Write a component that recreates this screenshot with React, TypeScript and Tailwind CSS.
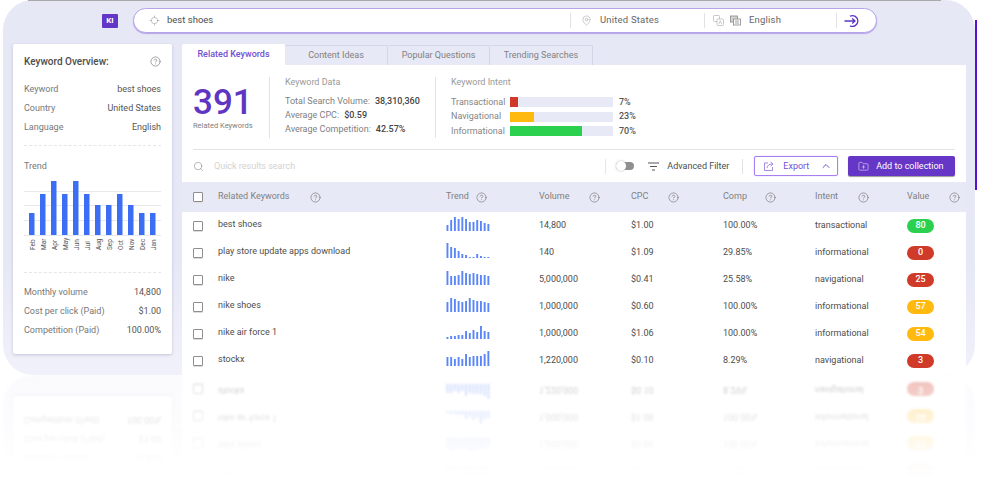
import React from "react";
import { CircleHelp, Search, ChevronUp, FolderPlus, MapPin, Locate } from "lucide-react";

const Help = ({ className = "" }: { className?: string }) => (
  <CircleHelp size={11} strokeWidth={1.3} className={"shrink-0 text-[#6b6b6b] " + className} />
);

const months = ["Feb", "Mar", "Apr", "May", "Jun", "Jul", "Aug", "Sep", "Oct", "Nov", "Dec", "Jan"];
const big = [22, 41, 54, 41, 54, 41, 30, 30, 41, 30, 22, 22];

const TrendChart = () => (
  <svg width="138" height="72" viewBox="0 0 138 72" className="mt-[7px] block">
    {[10, 24, 39, 54].map((y) => (
      <line key={y} x1="0" x2="137" y1={y + 0.5} y2={y + 0.5} stroke="#e8e8e8" strokeWidth="1" />
    ))}
    {big.map((h, i) => (
      <rect key={i} x={5 + i * 11} y={54 - h} width="5.5" height={h} fill="#3b6ef5" />
    ))}
    {months.map((m, i) => (
      <text
        key={m}
        transform={`translate(${10.5 + i * 11},69) rotate(-90)`}
        fontSize="6.5"
        fill="#555"
        fontFamily="Roboto, sans-serif"
      >
        {m}
      </text>
    ))}
  </svg>
);

const Spark = ({ v }: { v: number[] }) => (
  <svg width="46" height="16" viewBox="0 0 46 16" className="block">
    {v.map((h, i) => (
      <rect key={i} x={0.5 + i * 3.72} y={16 - h} width="1.9" height={h} fill="#5a86f7" />
    ))}
  </svg>
);

const TranslateIcon = ({ color, back }: { color: string; back: boolean }) => (
  <svg width="11" height="11" viewBox="0 0 11 11" fill="none" stroke={color} strokeWidth="0.8" className="shrink-0">
    {back ? (
      <>
        <rect x="0.5" y="0.5" width="6" height="6" rx="0.8" />
        <rect x="4" y="4" width="6.5" height="6.5" rx="0.8" fill="#fff" />
        <path d="M5.8 9 7.2 5.8 8.6 9" />
      </>
    ) : (
      <>
        <rect x="0.5" y="1" width="7" height="6" fill={color} fillOpacity="0.35" />
        <rect x="3.5" y="4" width="7" height="6" fill="#fff" />
        <path d="M5 6h4M5 8h4" />
      </>
    )}
  </svg>
);

type Row = { k: string; s: number[]; vol: string; cpc: string; comp: string; intent: string; val: number; c: string };
const RED = "bg-[#d03a28]";
const GREEN = "bg-[#2bd14e]";
const AMBER = "bg-[#ffb90f]";
const rows: Row[] = [
  { k: "best shoes", s: [6, 11, 14, 12, 14, 12, 9, 9, 11, 10, 8, 7], vol: "14,800", cpc: "$1.00", comp: "100.00%", intent: "transactional", val: 80, c: GREEN },
  { k: "play store update apps download", s: [15, 11, 10, 7, 4, 3, 1, 1, 4, 2, 1, 1], vol: "140", cpc: "$1.09", comp: "29.85%", intent: "informational", val: 0, c: RED },
  { k: "nike", s: [14, 9, 9, 10, 14, 12, 11, 12, 11, 10, 10, 9], vol: "5,000,000", cpc: "$0.41", comp: "25.58%", intent: "navigational", val: 25, c: RED },
  { k: "nike shoes", s: [10, 14, 13, 11, 10, 11, 14, 12, 11, 11, 10, 9], vol: "1,000,000", cpc: "$0.60", comp: "100.00%", intent: "informational", val: 57, c: AMBER },
  { k: "nike air force 1", s: [2, 3, 3, 4, 4, 8, 6, 9, 7, 13, 8, 7], vol: "1,000,000", cpc: "$1.06", comp: "100.00%", intent: "informational", val: 54, c: AMBER },
  { k: "stockx", s: [9, 9, 7, 9, 7, 12, 9, 10, 10, 10, 12, 15], vol: "1,220,000", cpc: "$0.10", comp: "8.29%", intent: "navigational", val: 3, c: RED },
];

const cols = "grid grid-cols-[25px_228px_93px_92px_92px_92px_92px_59px] items-center";

const HeadCell = ({ label, gap }: { label: string; gap: string }) => (
  <div className="flex items-center">
    <span>{label}</span>
    <Help className={gap} />
  </div>
);

const Checkbox = () => (
  <span className="block h-[10px] w-[10px] rounded-[1px] border border-[#8e8e8e] bg-white shadow-[0_1px_0_#ddd]" />
);

const Stat = ({ l, v }: { l: string; v: string }) => (
  <div className="flex h-[14px] items-center gap-[5px]">
    <span className="text-[#808080]">{l}</span>
    <span className="font-medium text-[#444]">{v}</span>
  </div>
);

const Intent = ({ l, w, c, p }: { l: string; w: string; c: string; p: string }) => (
  <div className="flex h-[14.5px] items-center">
    <span className="w-[59px] text-[#858585]">{l}</span>
    <div className="h-[10px] w-[103px] bg-[#e8e9f6]">
      <div className={"h-full " + w + " " + c} />
    </div>
    <span className="ml-[6px] font-medium text-[#555]">{p}</span>
  </div>
);

const Side = ({ l, v }: { l: string; v: string }) => (
  <div className="flex h-[19px] items-center justify-between">
    <span className="text-[#777]">{l}</span>
    <span className="text-[#555]">{v}</span>
  </div>
);

const Tab = ({ label, w, active }: { label: string; w: string; active?: boolean }) => (
  <div
    className={
      "flex items-center justify-center rounded-t-[2px] " +
      w +
      (active
        ? " h-[21px] bg-white font-medium text-[#7350d4]"
        : " mt-px h-[20px] border-r border-t border-[#d4d6e6] bg-[#e8e9f6] text-[#808080]")
    }
  >
    {label}
  </div>
);

const Panel = () => (
  <div className="relative h-[375px] w-[972px] overflow-hidden rounded-[30px] bg-gradient-to-b from-[#e7e8f6] from-70% to-[#f1f1fb] font-['Roboto',sans-serif] text-[9px] text-[#4d4d4d]">
    {/* search row */}
    <div className="flex h-[44px] items-start pl-[99px] pt-[8px]">
      <div className="mt-[6px] flex h-[14px] w-[16px] items-center justify-center rounded-[1px] bg-[#6237c8] text-[8px] font-bold text-white">
        KI
      </div>
      <div className="ml-[15px] flex h-[25px] w-[744px] items-center rounded-full border border-[#b7a3e8] bg-white text-[9.5px] shadow-[0_1px_1px_#b7a3e8]">
        <Locate size={11} strokeWidth={1.2} className="ml-[15px] shrink-0 text-[#999]" />
        <span className="ml-[7px] w-[403px] text-[#4d4d4d]">best shoes</span>
        <span className="h-[15px] w-px bg-[#e2e2e2]" />
        <MapPin size={11} strokeWidth={1.2} className="ml-[10px] shrink-0 text-[#a5a5a5]" />
        <span className="ml-[8px] w-[104px] tracking-[0.2px] text-[#666]">United States</span>
        <span className="h-[15px] w-px bg-[#e2e2e2]" />
        <span className="ml-[8px]">
          <TranslateIcon color="#bbb" back />
        </span>
        <span className="ml-[6px]">
          <TranslateIcon color="#888" back={false} />
        </span>
        <span className="ml-[8px] w-[87px] tracking-[0.2px] text-[#666]">English</span>
        <span className="h-[15px] w-px bg-[#e2e2e2]" />
        <svg width="17" height="14" viewBox="0 0 17 14" fill="none" stroke="#5f35c4" strokeWidth="1.3" className="ml-[7px] shrink-0">
          <path d="M6 2.2A5.4 5.4 0 1 1 6 11.8" />
          <path d="M0.5 7H11M8.2 4.4 11 7 8.2 9.6" />
        </svg>
      </div>
    </div>

    <div className="flex items-start pl-[10px]">
      {/* overview card */}
      <aside className="h-[310px] w-[159px] rounded-[2px] bg-white px-[11px] pt-[11px] shadow-[0_1px_3px_rgba(90,90,130,0.3)]">
        <div className="flex h-[12px] items-center justify-between">
          <span className="text-[10px] font-medium text-[#4d4d4d]">Keyword Overview:</span>
          <Help />
        </div>
        <div className="mt-[13px] border-b border-dashed border-[#e6e6e6] pb-[8px]">
          <Side l="Keyword" v="best shoes" />
          <Side l="Country" v="United States" />
          <Side l="Language" v="English" />
        </div>
        <div className="mt-[14px] text-[#777]">Trend</div>
        <div className="border-b border-dashed border-[#e6e6e6] pb-[19px]">
          <TrendChart />
        </div>
        <div className="mt-[11px]">
          <Side l="Monthly volume" v="14,800" />
          <Side l="Cost per click (Paid)" v="$1.00" />
          <Side l="Competition (Paid)" v="100.00%" />
        </div>
      </aside>

      {/* main */}
      <main className="ml-[10px] w-[784px]">
        <div className="flex">
          <Tab label="Related Keywords" w="w-[103px]" active />
          <Tab label="Content Ideas" w="w-[103px]" />
          <Tab label="Popular Questions" w="w-[102px]" />
          <Tab label="Trending Searches" w="w-[103px]" />
        </div>
        <div className="h-[310px] bg-white">
          <div className="mx-[11px] flex h-[85px] items-start border-b border-[#e4e4e4] pt-[12px]">
            <div className="w-[76px] pt-[10px]">
              <div className="text-[35px] font-medium leading-[32px] text-[#5f35c4]">391</div>
              <div className="mt-[1px] whitespace-nowrap text-[7.5px] text-[#808080]">Related Keywords</div>
            </div>
            <div className="h-[61px] w-px bg-[#e2e2e2]" />
            <div className="ml-[15px] w-[150px]">
              <div className="h-[11px] leading-[11px] text-[#999]">Keyword Data</div>
              <div className="mt-[7px]">
                <Stat l="Total Search Volume:" v="38,310,360" />
                <Stat l="Average CPC:" v="$0.59" />
                <Stat l="Average Competition:" v="42.57%" />
              </div>
            </div>
            <div className="h-[61px] w-px bg-[#e2e2e2]" />
            <div className="ml-[15px] w-[250px]">
              <div className="h-[11px] leading-[11px] text-[#999]">Keyword Intent</div>
              <div className="mt-[7px]">
                <Intent l="Transactional" w="w-[8px]" c={RED} p="7%" />
                <Intent l="Navigational" w="w-[24px]" c={AMBER} p="23%" />
                <Intent l="Informational" w="w-[72px]" c={GREEN} p="70%" />
              </div>
            </div>
          </div>

          {/* toolbar */}
          <div className="mx-[11px] flex h-[32px] items-center">
            <Search size={11} strokeWidth={1.3} className="shrink-0 text-[#888]" />
            <span className="ml-[10px] mt-px w-[392px] text-[#d2d2d2]">Quick results search</span>
            <span className="h-[15px] w-px bg-[#e6e6e6]" />
            <span className="relative ml-[10px] block h-[8px] w-[18px] rounded-full bg-[#8f8f8f]">
              <span className="absolute left-0 top-[-1px] h-[10px] w-[10px] rounded-full bg-white shadow-[0_0_2px_#aaa]" />
            </span>
            <svg width="11" height="9" viewBox="0 0 11 9" fill="none" stroke="#555" strokeWidth="1" className="ml-[14px] shrink-0">
              <path d="M0 1h11M2 4.5h7M4 8h3" />
            </svg>
            <span className="ml-[8px] mt-px w-[62px] whitespace-nowrap text-[#4d4d4d]">Advanced Filter</span>
            <span className="ml-[13px] h-[15px] w-px bg-[#e2e2e2]" />
            <div className="ml-[11px] flex h-[20px] w-[84px] items-center rounded-[2px] border border-[#a77ff0] pl-[9px] text-[#7350d4] shadow-[0_0_1px_#a77ff0]">
              <svg width="11" height="10" viewBox="0 0 11 10" fill="none" stroke="#9a7fe0" strokeWidth="0.9" className="shrink-0">
                <path d="M4 2H0.5v7.5h8V6" />
                <path d="M3 7C3.3 4.5 5 3 8 3M6.5 0.8 9 3 6.5 5.2" />
              </svg>
              <span className="ml-[8px] mt-px">Export</span>
              <ChevronUp size={12} strokeWidth={2} className="ml-[11px]" />
            </div>
            <div className="ml-[10px] flex h-[20px] w-[107px] items-center rounded-[2px] bg-[#6637c7] pl-[10px] text-white shadow-[0_1px_1px_#999]">
              <FolderPlus size={11} strokeWidth={1.1} className="shrink-0" />
              <span className="ml-[7px] mt-px whitespace-nowrap">Add to collection</span>
            </div>
          </div>

          {/* table */}
          <div className={cols + " h-[30px] bg-[#e8e9f6] pl-[11px] text-[#808080]"}>
            <Checkbox />
            <HeadCell label="Related Keywords" gap="ml-[20px]" />
            <HeadCell label="Trend" gap="ml-[7px]" />
            <HeadCell label="Volume" gap="ml-[20px]" />
            <HeadCell label="CPC" gap="ml-[20px]" />
            <HeadCell label="Comp" gap="ml-[18px]" />
            <HeadCell label="Intent" gap="ml-[20px]" />
            <HeadCell label="Value" gap="ml-[20px]" />
          </div>
          {rows.map((r) => (
            <div key={r.k} className={cols + " h-[27px] pl-[11px] text-[#4d4d4d]"}>
              <div>
                <Checkbox />
              </div>
              <span className="mb-[2px] whitespace-nowrap">{r.k}</span>
              <div className="mb-[5px]">
                <Spark v={r.s} />
              </div>
              <span>{r.vol}</span>
              <span>{r.cpc}</span>
              <span>{r.comp}</span>
              <span>{r.intent}</span>
              <span
                className={
                  "flex h-[14px] w-[27px] items-center justify-center rounded-full text-[9px] font-medium text-white " + r.c
                }
              >
                {r.val}
              </span>
            </div>
          ))}
        </div>
      </main>
    </div>
  </div>
);

export default function App() {
  return (
    <div className="relative h-[481px] w-[981px] overflow-hidden bg-white">
      <div className="ml-[3px]">
        <Panel />
      </div>
      <div
        aria-hidden
        className="ml-[3px] h-[106px] overflow-hidden opacity-40 blur-[1.2px] [mask-image:linear-gradient(to_bottom,rgba(0,0,0,0.8),rgba(0,0,0,0.06)_80%,transparent)]"
      >
        <div className="-scale-y-100">
          <Panel />
        </div>
      </div>
      {/* top edge and scrollbar sliver of the captured window */}
      <div className="absolute left-[28px] right-[40px] top-0 h-px bg-[#a9a9a9]" />
      <div className="absolute left-[975px] top-[20px] h-[170px] w-[2px] bg-[#5b10d0]" />
    </div>
  );
}
